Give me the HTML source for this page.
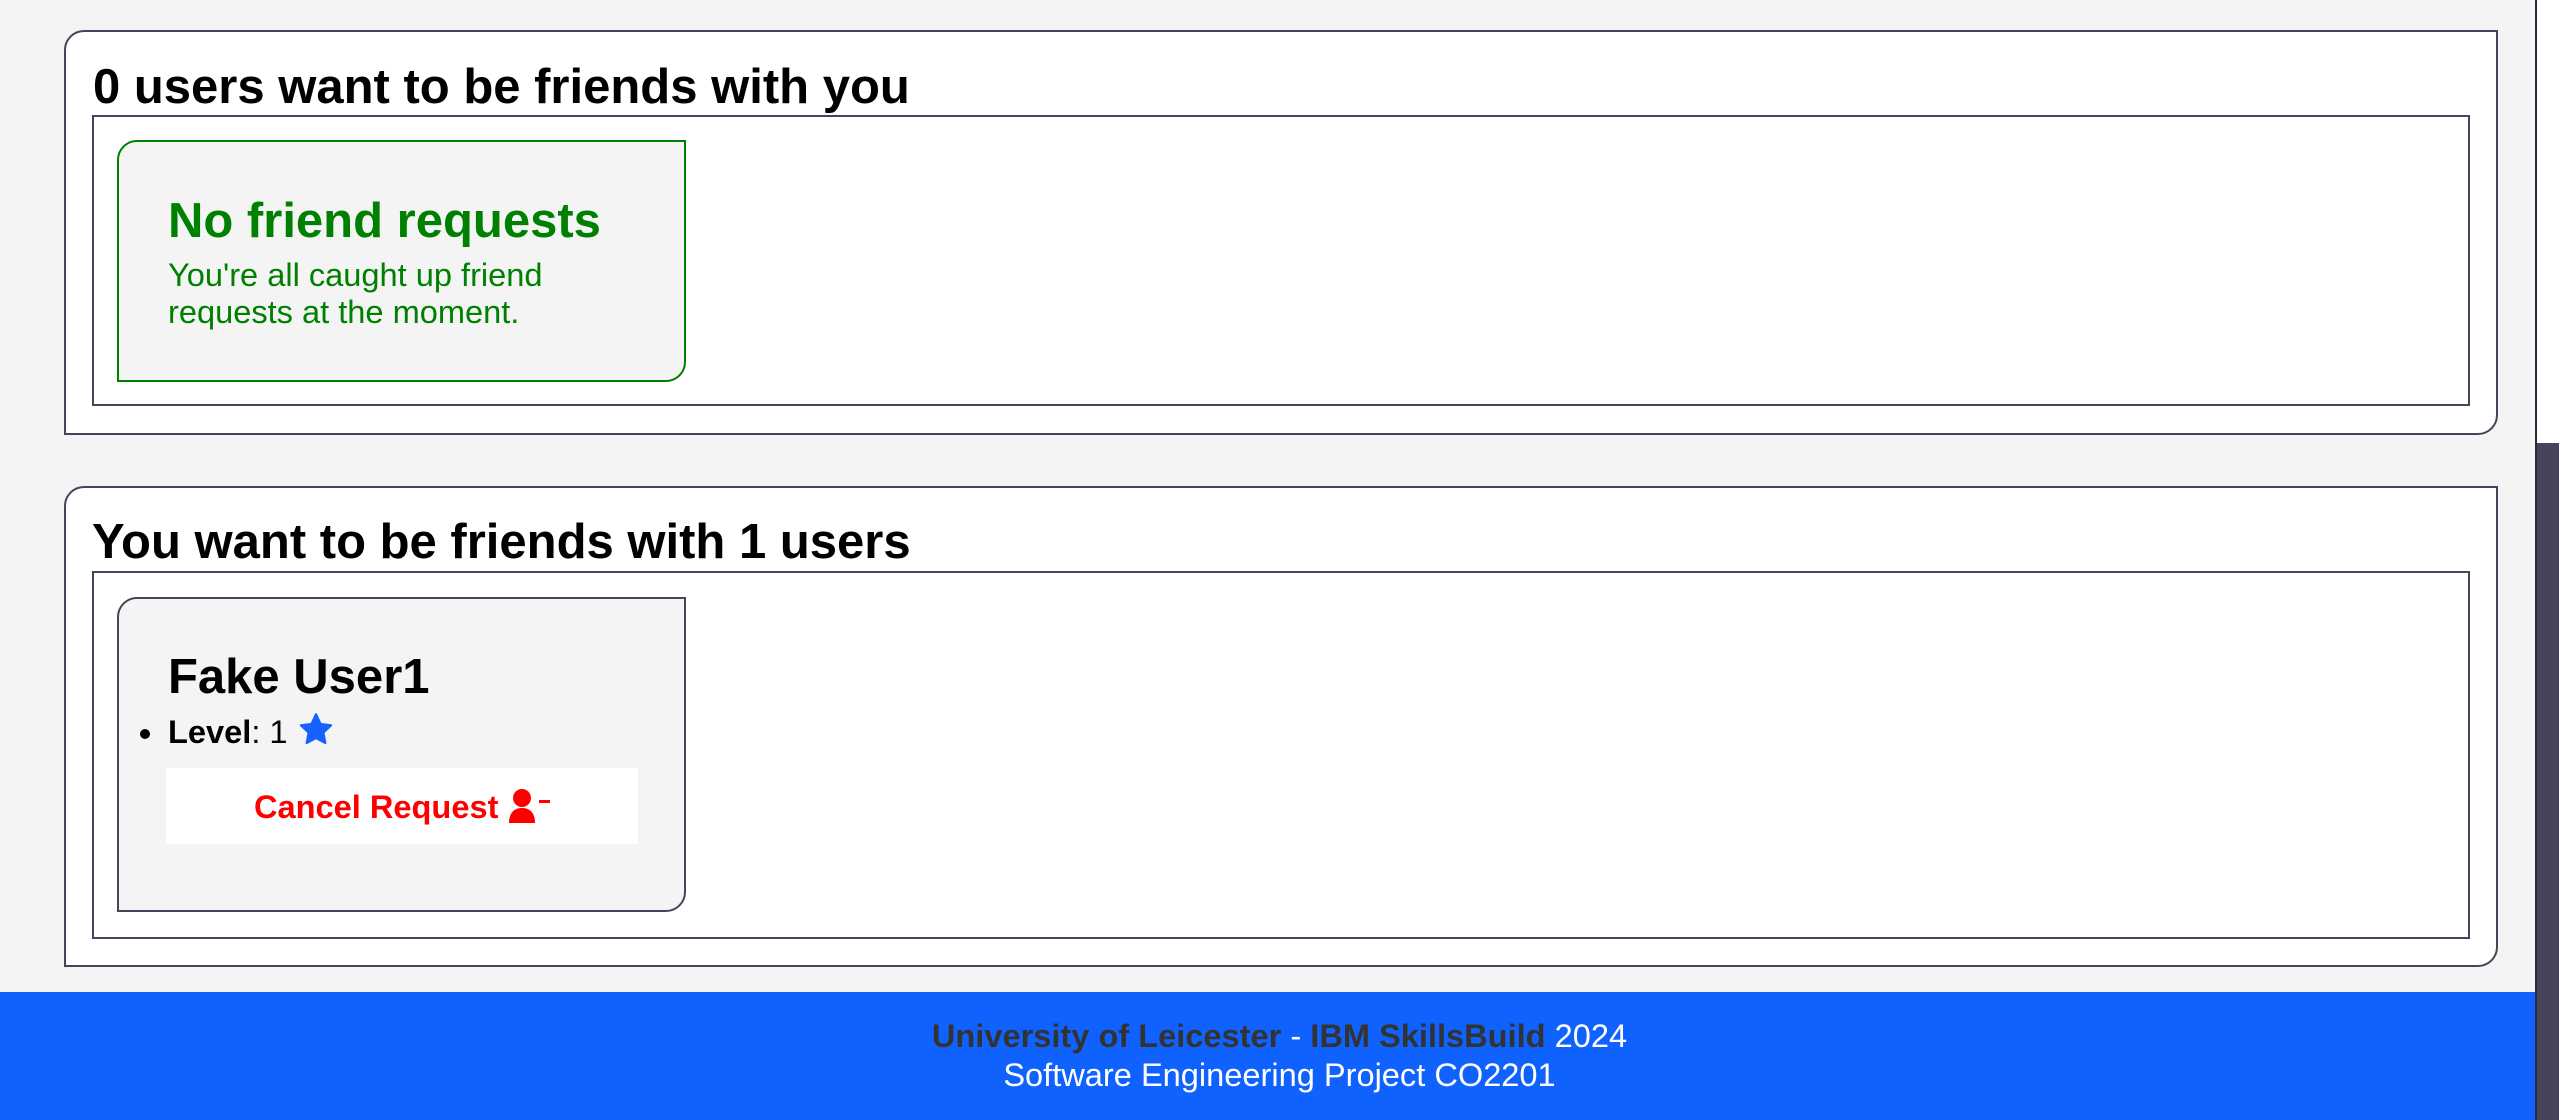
<!DOCTYPE html>
<html><head><meta charset="utf-8"><style>
*{margin:0;padding:0;box-sizing:border-box}
html,body{width:2559px;height:1120px;overflow:hidden;background:#f4f4f4;font-family:"Liberation Sans",Arial,sans-serif}
.abs{position:absolute}
.box{position:absolute;background:#fff;border:2px solid #45445a;border-radius:20px 0 20px 0}
.inner{position:absolute;border:2px solid #45445a;background:#fff}
.card{position:absolute;background:#f4f4f4;border:2px solid #45445a;border-radius:20px 0 20px 0}
h2{position:absolute;font-size:49px;font-weight:bold;line-height:1;white-space:nowrap}
.t{position:absolute;white-space:nowrap;line-height:1}
</style></head><body>
<div class="box" style="left:64px;top:30px;width:2434px;height:405px"></div>
<h2 style="left:93px;top:63px;color:#000">0 users want to be friends with you</h2>
<div class="inner" style="left:92px;top:115px;width:2378px;height:291px"></div>
<div class="card" style="left:117px;top:140px;width:569px;height:242px;border-color:#008000"></div>
<div class="t" style="left:168px;top:197px;font-size:49px;font-weight:bold;color:#008000">No friend requests</div>
<div class="t" style="left:168px;top:256px;font-size:32.6px;color:#008000;line-height:37px">You're all caught up friend<br>requests at the moment.</div>

<div class="box" style="left:64px;top:486px;width:2434px;height:481px"></div>
<h2 style="left:92px;top:518px;color:#000">You want to be friends with 1 users</h2>
<div class="inner" style="left:92px;top:571px;width:2378px;height:368px"></div>
<div class="card" style="left:117px;top:597px;width:569px;height:315px"></div>
<div class="t" style="left:168px;top:653px;font-size:49px;font-weight:bold;color:#000">Fake User1</div>
<div class="abs" style="left:140px;top:729px;width:10px;height:10px;border-radius:50%;background:#000"></div>
<div class="t" style="left:168px;top:716px;font-size:32.6px;color:#000"><b>Level</b>: 1</div>
<svg class="abs" style="left:298px;top:712px" width="36" height="34" viewBox="0 0 24 23"><path fill="#1662fe" stroke="#1662fe" stroke-width="1.5" stroke-linejoin="round" d="M12 1.5l3.1 6.6 7.1.9-5.2 4.9 1.3 7.1L12 17.6 5.7 21l1.3-7.1L1.8 9l7.1-.9z"/></svg>
<div class="abs" style="left:166px;top:768px;width:472px;height:76px;background:#fff"></div>
<div class="t" style="left:254px;top:791px;font-size:32.6px;font-weight:bold;color:#f00">Cancel Request</div>
<svg class="abs" style="left:509px;top:789px" width="44" height="34" viewBox="0 0 44 34"><circle cx="13" cy="9" r="9" fill="#f00"/><path fill="#f00" d="M0 34c0-10 5-15 13-15s13 5 13 15z"/><rect x="30" y="11" width="11" height="3" fill="#f00"/></svg>

<div class="abs" style="left:0;top:992px;width:2559px;height:128px;background:#0f62fe"></div>
<div class="t" style="left:0;top:1020px;width:2559px;text-align:center;font-size:32.6px;color:#fff"><b style="color:#333">University of Leicester</b> - <b style="color:#333">IBM SkillsBuild</b> 2024</div>
<div class="t" style="left:0;top:1059px;width:2559px;text-align:center;font-size:32.6px;color:#fff">Software Engineering Project CO2201</div>

<div class="abs" style="left:2535px;top:0;width:24px;height:1120px;background:#fff;border-left:2px solid #2a2a3c"></div>
<div class="abs" style="left:2537px;top:443px;width:22px;height:677px;background:#45445a"></div>
</body></html>
